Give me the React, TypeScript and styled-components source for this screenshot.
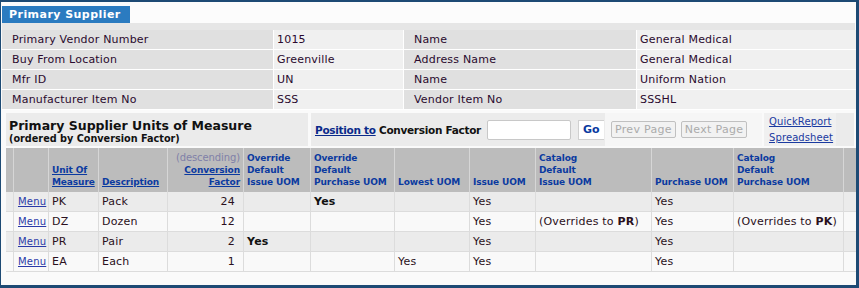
import React from "react";
import styled, { createGlobalStyle } from "styled-components";

const Global = createGlobalStyle`
  html, body { margin: 0; padding: 0; background: #ffffff; }
  * { box-sizing: border-box; }
`;

const FONT = `"DejaVu Sans", Verdana, "Liberation Sans", sans-serif`;

const Frame = styled.div`
  width: 859px;
  height: 288px;
  border-style: solid;
  border-color: #1d4a74;
  border-width: 2px 3px 3px 1px;
  background: #fafafa;
  font-family: ${FONT};
  font-size: 11px;
  letter-spacing: 0.2px;
  color: #2a1030;
  padding: 0 0 0 1px;
  overflow: hidden;
`;

const TabBar = styled.div`
  display: flex;
  padding-top: 4px;
  height: 21px;
  background: #fcfcfc;
`;

const Tab = styled.div`
  width: 128px;
  height: 17px;
  background: #2b7bc0;
  color: #ffffff;
  font-weight: bold;
  font-size: 11px;
  line-height: 17px;
  padding-left: 7px;
  letter-spacing: 0.45px;
`;

const Band = styled.div`
  height: 7px;
  background: #e6e6e6;
  margin-right: 1px;
`;

const InfoGrid = styled.div`
  display: grid;
  grid-template-columns: 271px 129px 232px 220px;
  grid-auto-rows: 19px;
  gap: 1px;
  background: #ffffff;
  width: 855px;
  padding-bottom: 1px;
`;

const InfoCell = styled.div<{ $label?: boolean }>`
  background: ${(p) => (p.$label ? "#e0e0e0" : "#f0f0f0")};
  padding-left: ${(p) => (p.$label ? "10px" : "3px")};
  line-height: 19px;
  white-space: nowrap;
  color: #2a0a2e;
`;

const SectionBar = styled.div`
  display: flex;
  height: 33px;
  margin: 3px 0 2px 4px;
  white-space: nowrap;
`;

const TitleBox = styled.div`
  width: 302px;
  background: #ebebeb;
  padding: 5px 0 0 3px;
  color: #111111;
  font-weight: bold;
  letter-spacing: 0;
`;

const Title = styled.div`
  font-size: 12.5px;
  line-height: 15px;
`;

const SubTitle = styled.div`
  font-size: 9.7px;
  line-height: 12px;
`;

const PositionBox = styled.div`
  width: 294px;
  margin-left: 3px;
  background: #ebebeb;
  display: flex;
  align-items: center;
  padding-left: 4px;
  font-weight: bold;
  font-size: 10.5px;
  letter-spacing: -0.3px;
  color: #111111;
  gap: 5px;
`;

const PosLink = styled.a`
  color: #0a2a8a;
  text-decoration: underline;
  cursor: pointer;
`;

const PosInput = styled.input`
  width: 84px;
  height: 20px;
  border: 1px solid #c8c8c8;
  border-radius: 2px;
  background: #ffffff;
  margin-left: 1px;
`;

const GoButton = styled.button`
  margin-left: 2px;
  height: 20px;
  padding: 0 4px;
  border: 1px solid #d0d0d0;
  border-right: none;
  background: #ffffff;
  color: #0a3aa0;
  font-family: ${FONT};
  font-weight: bold;
  font-size: 11px;
`;

const PagerBox = styled.div`
  width: 157px;
  background: #f6f6f6;
  display: flex;
  align-items: center;
  padding-left: 6px;
  gap: 5px;
`;

const PageButton = styled.button`
  height: 17px;
  padding: 0 3px;
  border: 1px solid #c0c0c0;
  border-radius: 2px;
  background: #f2f2f2;
  color: #ababab;
  font-family: ${FONT};
  font-size: 11px;
  letter-spacing: 0.3px;
  line-height: 15px;
  white-space: nowrap;
`;

const LinksBox = styled.div`
  width: 72px;
  margin-left: 2px;
  background: #f0f0f0;
  display: flex;
  flex-direction: column;
  padding: 3px 0 0 5px;
  gap: 4px;
`;

const SmallLink = styled.a`
  font-size: 10px;
  line-height: 12px;
  letter-spacing: 0.1px;
  color: #1a3aa0;
  text-decoration: underline;
  cursor: pointer;
`;

const FillerBox = styled.div`
  flex: 1;
  margin-right: 2px;
  background: #ebebeb;
`;

const Table = styled.table`
  margin-left: 4px;
  width: 852px;
  table-layout: fixed;
  border-collapse: separate;
  border-spacing: 0;
  font-size: 11px;
`;

const HeadCell = styled.th<{ $right?: boolean }>`
  background: #bcbcbc;
  border-right: 1px solid #d6d6d6;
  vertical-align: bottom;
  text-align: ${(p) => (p.$right ? "right" : "left")};
  padding: 2px 3px 4px 3px;
  height: 44px;
  font-size: 9px;
  letter-spacing: -0.1px;
  line-height: 12px;
  font-weight: bold;
  color: #0b3aa0;
`;

const HeadLink = styled.a`
  color: #0b3aa0;
  text-decoration: underline;
  cursor: pointer;
`;

const Muted = styled.span`
  color: #8080a8;
  font-weight: normal;
  font-size: 10px;
`;

const Row = styled.tr<{ $alt?: boolean }>`
  background: ${(p) => (p.$alt ? "#f9f9f9" : "#ebebeb")};
`;

const Cell = styled.td<{ $right?: boolean; $bold?: boolean }>`
  height: 20px;
  border-right: 1px solid #dcdcdc;
  border-bottom: 1px solid #dcdcdc;
  padding: 0 ${(p) => (p.$right ? "8px" : "3px")} 0 3px;
  text-align: ${(p) => (p.$right ? "right" : "left")};
  font-weight: ${(p) => (p.$bold ? "bold" : "normal")};
  color: ${(p) => (p.$bold ? "#111111" : "#2a1020")};
  white-space: nowrap;
  overflow: hidden;
`;

const MenuLink = styled.a`
  font-size: 10px;
  color: #2a3aa8;
  text-decoration: underline;
  cursor: pointer;
  padding-left: 1px;
`;

const widths = [8, 35, 50, 69, 76, 67, 84, 75, 66, 116, 82, 110, 14];

type Uom = {
  code: string;
  desc: string;
  factor: number;
  ovIssue?: boolean;
  ovPurchase?: boolean;
  lowest?: boolean;
  catIssue?: string;
  catPurchase?: string;
};

const rows: Uom[] = [
  { code: "PK", desc: "Pack", factor: 24, ovPurchase: true },
  { code: "DZ", desc: "Dozen", factor: 12, catIssue: "PR", catPurchase: "PK" },
  { code: "PR", desc: "Pair", factor: 2, ovIssue: true },
  { code: "EA", desc: "Each", factor: 1, lowest: true },
];

const Overrides = ({ to }: { to?: string }) =>
  to ? (
    <>
      (Overrides to <b>{to}</b>)
    </>
  ) : null;

export default function App() {
  return (
    <>
      <Global />
      <Frame>
        <TabBar>
          <Tab>Primary Supplier</Tab>
        </TabBar>
        <Band />
        <InfoGrid>
          <InfoCell $label>Primary Vendor Number</InfoCell>
          <InfoCell>1015</InfoCell>
          <InfoCell $label>Name</InfoCell>
          <InfoCell>General Medical</InfoCell>
          <InfoCell $label>Buy From Location</InfoCell>
          <InfoCell>Greenville</InfoCell>
          <InfoCell $label>Address Name</InfoCell>
          <InfoCell>General Medical</InfoCell>
          <InfoCell $label>Mfr ID</InfoCell>
          <InfoCell>UN</InfoCell>
          <InfoCell $label>Name</InfoCell>
          <InfoCell>Uniform Nation</InfoCell>
          <InfoCell $label>Manufacturer Item No</InfoCell>
          <InfoCell>SSS</InfoCell>
          <InfoCell $label>Vendor Item No</InfoCell>
          <InfoCell>SSSHL</InfoCell>
        </InfoGrid>
        <SectionBar>
          <TitleBox>
            <Title>Primary Supplier Units of Measure</Title>
            <SubTitle>(ordered by Conversion Factor)</SubTitle>
          </TitleBox>
          <PositionBox>
            <span>
              <PosLink>Position to</PosLink> Conversion Factor
            </span>
            <PosInput />
            <GoButton>Go</GoButton>
          </PositionBox>
          <PagerBox>
            <PageButton disabled>Prev Page</PageButton>
            <PageButton disabled>Next Page</PageButton>
          </PagerBox>
          <LinksBox>
            <SmallLink>QuickReport</SmallLink>
            <SmallLink>Spreadsheet</SmallLink>
          </LinksBox>
          <FillerBox />
        </SectionBar>
        <Table>
          <colgroup>
            {widths.map((w, i) => (
              <col key={i} style={{ width: w }} />
            ))}
          </colgroup>
          <thead>
            <tr>
              <HeadCell />
              <HeadCell />
              <HeadCell>
                <HeadLink>Unit Of Measure</HeadLink>
              </HeadCell>
              <HeadCell>
                <HeadLink>Description</HeadLink>
              </HeadCell>
              <HeadCell $right>
                <Muted>(descending)</Muted>
                <br />
                <HeadLink>Conversion Factor</HeadLink>
              </HeadCell>
              <HeadCell>Override Default Issue UOM</HeadCell>
              <HeadCell>Override Default Purchase UOM</HeadCell>
              <HeadCell>Lowest UOM</HeadCell>
              <HeadCell>Issue UOM</HeadCell>
              <HeadCell>
                Catalog
                <br />
                Default
                <br />
                Issue UOM
              </HeadCell>
              <HeadCell>Purchase UOM</HeadCell>
              <HeadCell>
                Catalog
                <br />
                Default
                <br />
                Purchase UOM
              </HeadCell>
              <HeadCell />
            </tr>
          </thead>
          <tbody>
            {rows.map((r, i) => (
              <Row key={r.code} $alt={i % 2 === 1}>
                <Cell />
                <Cell>
                  <MenuLink>Menu</MenuLink>
                </Cell>
                <Cell>{r.code}</Cell>
                <Cell>{r.desc}</Cell>
                <Cell $right>{r.factor}</Cell>
                <Cell $bold>{r.ovIssue ? "Yes" : ""}</Cell>
                <Cell $bold>{r.ovPurchase ? "Yes" : ""}</Cell>
                <Cell>{r.lowest ? "Yes" : ""}</Cell>
                <Cell>Yes</Cell>
                <Cell>
                  <Overrides to={r.catIssue} />
                </Cell>
                <Cell>Yes</Cell>
                <Cell>
                  <Overrides to={r.catPurchase} />
                </Cell>
                <Cell />
              </Row>
            ))}
          </tbody>
        </Table>
      </Frame>
    </>
  );
}
